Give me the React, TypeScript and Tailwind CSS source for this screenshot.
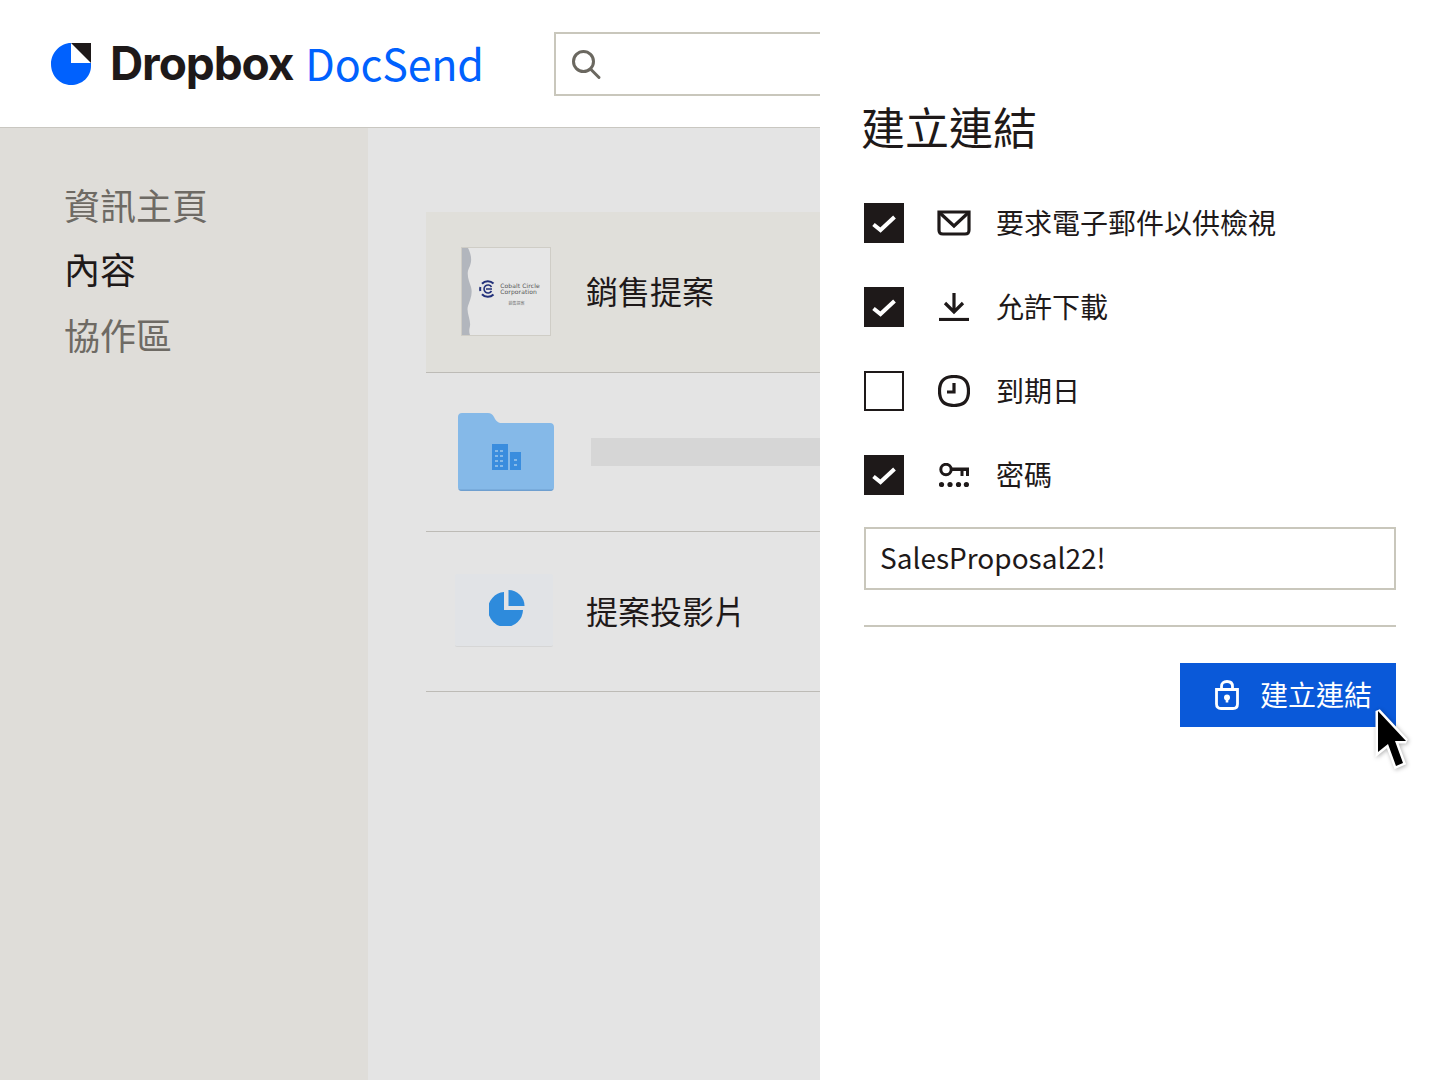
import type { ReactNode } from 'react';

const cjk = "font-['Noto_Sans_CJK_TC','Noto_Sans',sans-serif]";

function Logo() {
  return (
    <svg width="42" height="44" viewBox="0 0 42 44" className="shrink-0">
      <path d="M21 1 L21 21 L41 21 L41 24 C41 35 32 43 21 43 C10 43 1 34 1 22 C1 11 10 1 21 1 Z" fill="#0061fe" />
      <path d="M21 1 H41 V21 Z" fill="#1e1919" />
    </svg>
  );
}

function SearchIcon() {
  return (
    <svg width="32" height="32" viewBox="0 0 32 32" fill="none" stroke="#6b6860" strokeWidth="3">
      <circle cx="13.5" cy="13.5" r="10" />
      <path d="M20.5 21 L29 29.5" strokeLinecap="round" />
    </svg>
  );
}

function DocThumb() {
  return (
    <div className="w-[90px] h-[89px] bg-[#e6e6e6] border border-[#cfcdc6] flex relative -mt-[2px]">
      <svg width="11" height="87" viewBox="0 0 11 87" className="shrink-0">
        <path d="M0 0 H6 C10 8 10 14 7 20 C4 26 7 33 9 39 C11 46 8 52 6 58 C4 64 9 72 8 78 C7 82 7 84 8 87 H0 Z" fill="#b2b6bd" />
      </svg>
      <div className="flex-1 flex flex-col items-center pt-[32px] pr-[4px]">
        <div className="flex items-center gap-[3px]">
          <svg width="18" height="18" viewBox="0 0 18 18" fill="none" stroke="#22307a" strokeWidth="2">
            <path d="M14.5 3.5 A8 8 0 0 0 3 3.8 M3 14.2 A8 8 0 0 0 14.5 14.5 M1.4 7 A8 8 0 0 0 1.4 11" />
            <path d="M12.5 7 A4 4 0 1 0 12.5 11 M7 9 H13" strokeWidth="1.6" />
          </svg>
          <div className="font-['DejaVu_Sans',sans-serif] text-[6px] leading-[6px] tracking-[0.1px] text-[#555]">
            <div>Cobalt Circle</div>
            <div>Corporation</div>
          </div>
        </div>
        <div className={`${cjk} text-[4px] leading-[5px] text-[#777] mt-[3px] ml-[14px]`}>銷售提案</div>
      </div>
    </div>
  );
}

function FolderIcon() {
  return (
    <svg width="96" height="78" viewBox="0 0 96 78">
      <path d="M0 4 C0 1.5 1.5 0 4 0 H30 C33 0 34 1 36 4 C38 8 40 10 44 10 H92 C94.5 10 96 11.5 96 14 V74 C96 76.5 94.5 78 92 78 H4 C1.5 78 0 76.5 0 74 Z" fill="#85b9e8" />
      <path d="M0 74 C0 76.5 1.5 78 4 78 H92 C94.5 78 96 76.5 96 74 V75 C96 76 94 76.5 92 76.5 H4 C2 76.5 0 76 0 75 Z" fill="#6f9fcf" />
      <path d="M34 31 H50 V57 H34 Z M52 39 H63 V57 H52 Z" fill="#3a8dde" />
      <g fill="#85b9e8">
        <rect x="37" y="37" width="3" height="2" /><rect x="42" y="37" width="3" height="2" />
        <rect x="37" y="42" width="3" height="2" /><rect x="42" y="42" width="3" height="2" />
        <rect x="37" y="47" width="3" height="2" /><rect x="42" y="47" width="3" height="2" />
        <rect x="37" y="52" width="3" height="2" /><rect x="42" y="52" width="3" height="2" />
        <rect x="56" y="46" width="3" height="2" /><rect x="56" y="51" width="3" height="2" />
      </g>
    </svg>
  );
}

function DeckThumb() {
  return (
    <div className="w-[98px] h-[73px] bg-[#e1e3e6] rounded-[2px] border-b border-[#d6d6d6] flex items-center justify-center mb-[3px]">
      <svg width="38" height="36" viewBox="0 0 38 36" className="ml-[7px] mb-[3px]">
        <path d="M15 3 V21 H34 A17.5 17.5 0 1 1 15 3 Z" fill="#2e8bdc" transform="translate(0 -1)" />
        <path d="M19.5 0 A16 16 0 0 1 35.5 16 H19.5 Z" fill="#2e8bdc" />
      </svg>
    </div>
  );
}

function Row({ icon, children, active, iconPad, height }: { icon: ReactNode; children: ReactNode; active?: boolean; iconPad: string; height: string }) {
  return (
    <div className={`${height} flex items-center border-b border-[#bdbbb6] ${active ? 'bg-[#e0dfda]' : ''}`}>
      <div className={`${iconPad} shrink-0`}>{icon}</div>
      {children}
    </div>
  );
}

function Check({ on }: { on: boolean }) {
  if (!on) return <div className="w-10 h-10 border-2 border-[#1e1919] bg-white" />;
  return (
    <div className="w-10 h-10 bg-[#1e1919] flex items-center justify-center">
      <svg width="24" height="24" viewBox="0 0 24 24" fill="none" stroke="#fff" strokeWidth="4">
        <path d="M1.5 13.5 L8.5 19 L22.5 6" />
      </svg>
    </div>
  );
}

const ink = { stroke: '#1e1919', fill: 'none', strokeWidth: 3.2 };

function MailIcon() {
  return (
    <svg width="34" height="26" viewBox="0 0 34 26" {...ink}>
      <path d="M2 2 H32 V20 C32 23 31 24 28 24 H6 C3 24 2 23 2 20 Z" />
      <path d="M3 3 L17 16 L31 3" />
    </svg>
  );
}

function DownloadIcon() {
  return (
    <svg width="30" height="28" viewBox="0 0 30 28" {...ink}>
      <path d="M15 0 V18 M6 10 L15 19 L24 10" />
      <path d="M0 26.5 H30" />
    </svg>
  );
}

function ClockIcon() {
  return (
    <svg width="32" height="32" viewBox="0 0 32 32" {...ink}>
      <path d="M16 1.5 C26 1.5 30.5 6 30.5 16 C30.5 26 26 30.5 16 30.5 C6 30.5 1.5 26 1.5 16 C1.5 6 6 1.5 16 1.5 Z" />
      <path d="M16 8 V17 H9" />
    </svg>
  );
}

function KeyIcon() {
  return (
    <svg width="30" height="25" viewBox="0 0 30 25">
      <circle cx="7" cy="6.5" r="5.2" fill="none" stroke="#1e1919" strokeWidth="3" />
      <path d="M12 4.5 H30 V13 H27 V8 H24.5 V13 H21.5 V8 H12 Z" fill="#1e1919" />
      <circle cx="2.5" cy="21.5" r="2.6" fill="#1e1919" />
      <circle cx="11" cy="21.5" r="2.6" fill="#1e1919" />
      <circle cx="19.5" cy="21.5" r="2.6" fill="#1e1919" />
      <circle cx="27.4" cy="21.5" r="2.6" fill="#1e1919" />
    </svg>
  );
}

function LockIcon() {
  return (
    <svg width="24" height="30" viewBox="0 0 24 30" fill="none" stroke="#fff" strokeWidth="2.8">
      <path d="M6.5 9 V6.5 C6.5 3 8.5 1.5 12 1.5 C15.5 1.5 17.5 3 17.5 6.5 V9" />
      <path d="M1.5 9.5 H22.5 V24 C22.5 27 21 28.5 18 28.5 H6 C3 28.5 1.5 27 1.5 24 Z" />
      <circle cx="12" cy="17.5" r="3" fill="#fff" stroke="none" />
      <path d="M12 18 V22.5" strokeWidth="2.6" />
    </svg>
  );
}

function Cursor() {
  return (
    <svg width="44" height="72" viewBox="0 0 44 72" className="drop-shadow-[1px_1px_2px_rgba(0,0,0,0.3)]">
      <path d="M6 7 L6 48 L16 40 L24 62 L31 59 L23 37 L34 37 Z" fill="#000" stroke="#fff" strokeWidth="5" strokeLinejoin="miter" strokeMiterlimit="2.5" paintOrder="stroke" />
    </svg>
  );
}

const options = [
  { label: '要求電子郵件以供檢視', on: true, icon: <MailIcon /> },
  { label: '允許下載', on: true, icon: <DownloadIcon /> },
  { label: '到期日', on: false, icon: <ClockIcon /> },
  { label: '密碼', on: true, icon: <KeyIcon /> },
];

export default function App() {
  return (
    <div className={`w-[1440px] h-[1080px] flex overflow-hidden bg-white ${cjk}`}>
      <div className="w-[820px] shrink-0 flex flex-col">
        <header className="h-[128px] shrink-0 flex items-center border-b border-[#c9c7c1] pl-[50px]">
          <Logo />
          <span className="font-['Inter',sans-serif] font-bold text-[46px] tracking-[-1.1px] text-[#1e1919] ml-[18px] leading-none -mt-[1px]">Dropbox</span>
          <span className={`${cjk} text-[43px] tracking-[-0.2px] text-[#0061fe] ml-[12px] leading-none -mt-[2px]`}>DocSend</span>
          <div className="ml-[70px] flex-1 h-[64px] border-2 border-r-0 border-[#c9c7bc] flex items-center pl-[14px]">
            <SearchIcon />
          </div>
        </header>
        <div className="flex-1 flex">
          <aside className="w-[368px] shrink-0 bg-[#dfddd9] pl-[64px] pt-[44px] flex flex-col text-[36px] leading-[65px] text-[#6e6a64]">
            <div>資訊主頁</div>
            <div className="text-[#1e1919] -mt-[1px] mb-[1px]">內容</div>
            <div>協作區</div>
          </aside>
          <main className="flex-1 bg-[#e4e4e4] pl-[58px] pt-[84px]">
            <Row active height="h-[161px]" iconPad="pl-[35px] pr-[35px]" icon={<DocThumb />}>
              <span className="text-[32px] text-[#1e1919] -mt-[4px]">銷售提案</span>
            </Row>
            <Row height="h-[159px]" iconPad="pl-[32px] pr-[37px]" icon={<FolderIcon />}>
              <div className="flex-1 h-[28px] bg-[#d6d6d6]" />
            </Row>
            <Row height="h-[160px]" iconPad="pl-[29px] pr-[33px]" icon={<DeckThumb />}>
              <span className="text-[32px] text-[#1e1919] -mt-[4px]">提案投影片</span>
            </Row>
          </main>
        </div>
      </div>

      <section className="flex-1 pl-[44px] pr-[44px] pt-[94px] flex flex-col">
        <h1 className="text-[44px] leading-[64px] text-[#1e1919] -ml-[3px]">建立連結</h1>
        <div className="mt-[45px] flex flex-col gap-[44px]">
          {options.map((o) => (
            <div key={o.label} className="flex items-center h-10">
              <Check on={o.on} />
              <div className="w-[34px] ml-[33px] flex justify-center">{o.icon}</div>
              <span className="ml-[25px] text-[28px] text-[#1e1919] -mt-[2px]">{o.label}</span>
            </div>
          ))}
        </div>
        <div className="mt-[32px] h-[63px] border-2 border-[#c9c7bc] flex items-center pl-[14px] text-[28px] text-[#1e1919]"><span className="-mt-[3px]">SalesProposal22!</span></div>
        <div className="mt-[35px] border-t-2 border-[#c9c7bc]" />
        <div className="mt-[36px] self-end relative">
          <div className="w-[216px] h-[64px] bg-[#0a59d9] flex items-center pl-[35px] text-white text-[28px]">
            <LockIcon />
            <span className="ml-[22px] -mt-[2px] -translate-x-[1px]">建立連結</span>
          </div>
          <div className="absolute left-[192px] top-[41px]">
            <Cursor />
          </div>
        </div>
      </section>
    </div>
  );
}
